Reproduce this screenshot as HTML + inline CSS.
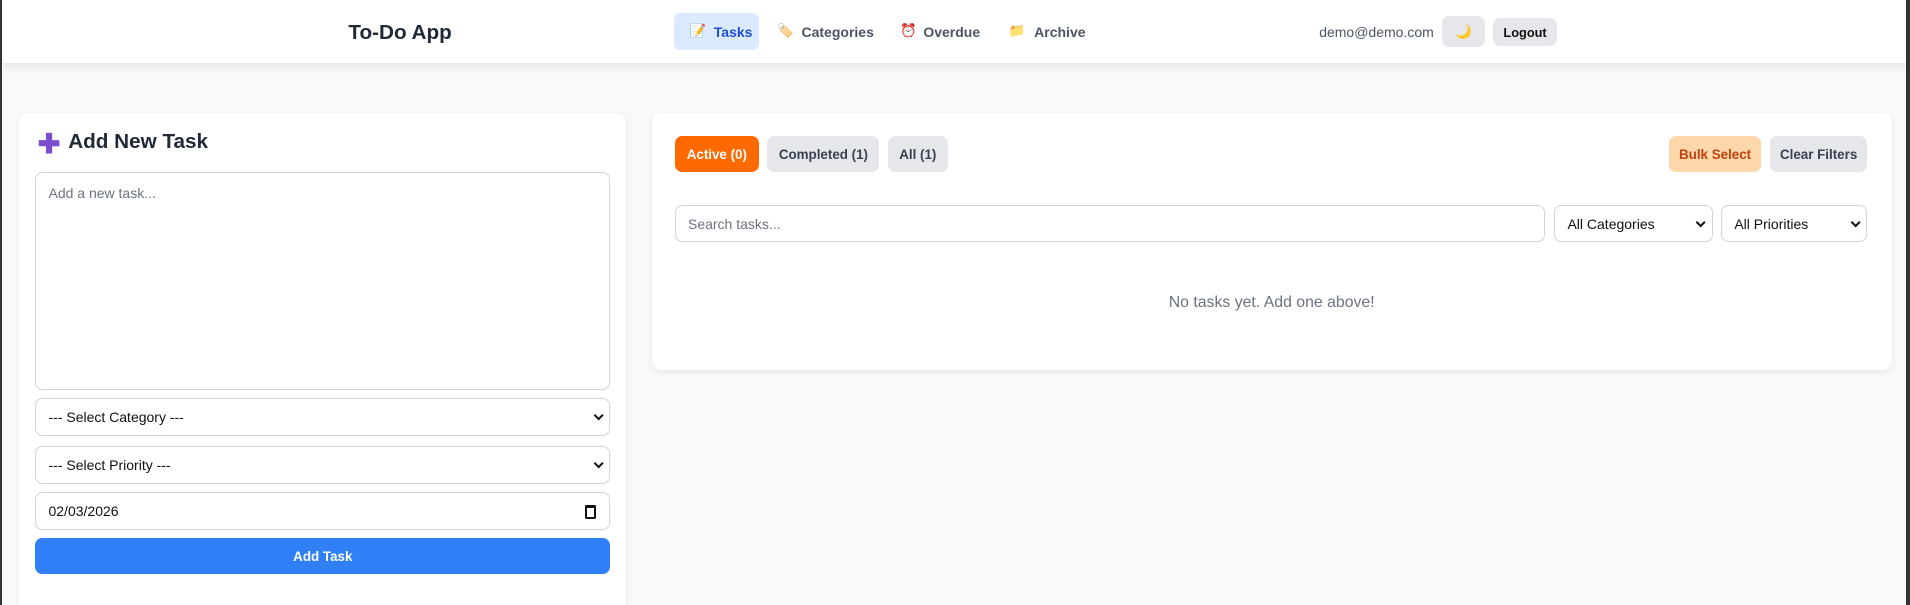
<!DOCTYPE html>
<html><head><meta charset="utf-8"><style>
*{box-sizing:border-box;margin:0;padding:0}
html,body{width:1910px;height:605px;overflow:hidden}
body{background:#f8f9fb;font-family:"Liberation Sans",sans-serif;color:#1f2937}
#w{zoom:1.2181;position:relative;width:1568px;height:497px}
.a{position:absolute}
.hdr{left:2px;top:0;width:1563px;height:52px;background:#fff;box-shadow:0 3px 8px rgba(0,0,0,.1)}
.lb{left:0;top:0;width:2px;height:497px;background:#333}
.rb{left:1565px;top:0;width:3px;height:497px;background:#333}
.nav{font-size:11.5px;color:#4b5563;top:20px}
.btn{border-radius:6px;display:flex;align-items:center;justify-content:center;font-size:11px;font-weight:bold}
.card{background:#fff;border-radius:8px;box-shadow:0 2px 6px rgba(0,0,0,.07)}
.inp{background:#fff;border:1px solid #d1d5db;border-radius:6px;font-size:11.5px;color:#111;display:flex;align-items:center;padding-left:10px}
.chev{position:absolute;right:6px;top:50%;margin-top:-4px;width:6px;height:6px;border-right:2px solid #111;border-bottom:2px solid #111;transform:rotate(45deg)}
</style></head><body><div id="w">
<div class="a hdr"></div>
<div class="a lb"></div><div class="a rb"></div>
<div class="a" style="left:286px;top:17px;font-size:17px;font-weight:bold;color:#1f2937">To-Do App</div>
<div class="a" style="left:553px;top:11px;width:70px;height:30px;background:#dbeafe;border-radius:5px"></div>
<div class="a nav" style="left:566px;top:19px;font-size:11px">📝</div>
<div class="a nav" style="left:586px;color:#1d4ed8;font-weight:bold">Tasks</div>
<div class="a nav" style="left:638px;top:19px;font-size:11px">🏷️</div>
<div class="a nav" style="left:658px;font-weight:bold">Categories</div>
<div class="a nav" style="left:739px;top:19px;font-size:11px">⏰</div>
<div class="a nav" style="left:758px;font-weight:bold">Overdue</div>
<div class="a nav" style="left:828px;top:19px;font-size:11px">📁</div>
<div class="a nav" style="left:849px;font-weight:bold">Archive</div>
<div class="a" style="left:1083px;top:20px;font-size:11.5px;color:#4b5563">demo@demo.com</div>
<div class="a btn" style="left:1184px;top:13px;width:35px;height:26px;background:#e5e7eb;font-size:11px">🌙</div>
<div class="a btn" style="left:1226px;top:15px;width:52px;height:23px;background:#e5e7eb;font-size:10.5px;color:#111">Logout</div>

<div class="a card" style="left:16px;top:93px;width:498px;height:420px"></div>
<div class="a" style="left:31px;top:108px;font-size:22px;color:#7c4dcc;font-weight:bold;line-height:20px">✚</div>
<div class="a" style="left:56px;top:107px;font-size:17px;font-weight:bold;color:#1f2937">Add New Task</div>
<div class="a inp" style="left:29px;top:141px;width:472px;height:179px;align-items:flex-start;padding-top:10px;color:#6b7280">Add a new task...</div>
<div class="a inp" style="left:29px;top:327px;width:472px;height:31px">--- Select Category ---<span class="chev"></span></div>
<div class="a inp" style="left:29px;top:366px;width:472px;height:31px">--- Select Priority ---<span class="chev"></span></div>
<div class="a inp" style="left:29px;top:404px;width:472px;height:31px">02/03/2026<span class="a" style="right:11px;top:10px;width:9px;height:11px;border:2px solid #111;border-top-width:3px;border-radius:1px"></span></div>
<div class="a btn" style="left:29px;top:442px;width:472px;height:29px;background:#2f7ff7;color:#fff">Add Task</div>

<div class="a card" style="left:535px;top:93px;width:1018px;height:211px"></div>
<div class="a btn" style="left:554px;top:112px;width:69px;height:29px;background:#ff6a00;color:#fff">Active (0)</div>
<div class="a btn" style="left:630px;top:112px;width:92px;height:29px;background:#e5e7eb;color:#374151">Completed (1)</div>
<div class="a btn" style="left:729px;top:112px;width:49px;height:29px;background:#e5e7eb;color:#374151">All (1)</div>
<div class="a btn" style="left:1370px;top:112px;width:76px;height:29px;background:#fed7aa;color:#c2410c">Bulk Select</div>
<div class="a btn" style="left:1453px;top:112px;width:80px;height:29px;background:#e5e7eb;color:#374151">Clear Filters</div>
<div class="a inp" style="left:554px;top:168px;width:714px;height:31px;color:#6b7280">Search tasks...</div>
<div class="a inp" style="left:1276px;top:168px;width:130px;height:31px">All Categories<span class="chev"></span></div>
<div class="a inp" style="left:1413px;top:168px;width:120px;height:31px">All Priorities<span class="chev"></span></div>
<div class="a" style="left:535px;top:241px;width:1018px;text-align:center;font-size:13px;color:#6b7280">No tasks yet. Add one above!</div>
</div></body></html>
